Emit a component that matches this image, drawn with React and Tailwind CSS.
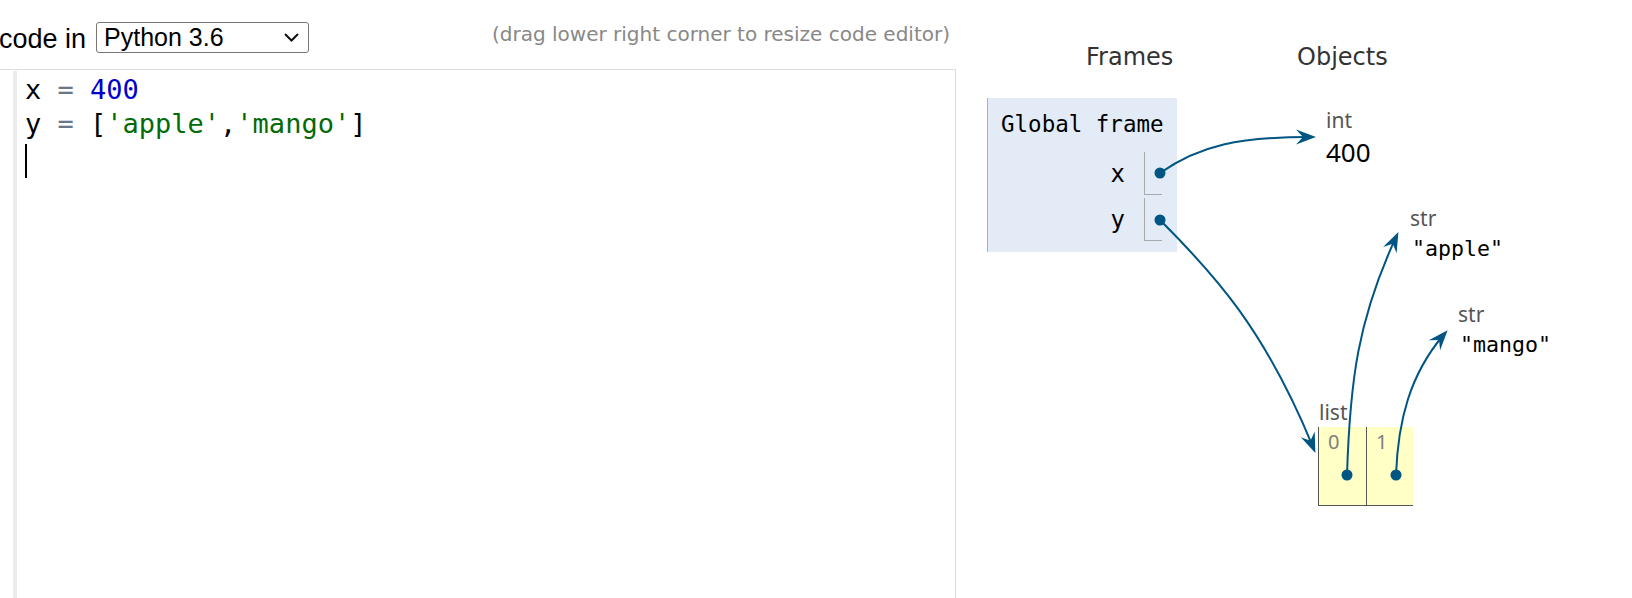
const ARROW = "#005583";

function Arrow({ d, end, angle }) {
  return (
    <g>
      <path d={d} fill="none" stroke={ARROW} strokeWidth="2" />
      <polygon
        points="7,0 -13,-7.5 -6,0 -13,7.5"
        fill={ARROW}
        transform={`translate(${end[0]} ${end[1]}) rotate(${angle})`}
      />
    </g>
  );
}

function Dot({ x, y }) {
  return <circle cx={x} cy={y} r="5.5" fill={ARROW} />;
}

function Label({ left, top, children }) {
  return (
    <div
      className="absolute text-[21px] leading-[24px] text-[#555]"
      style={{ left, top, fontFamily: '"Noto Sans", sans-serif' }}
    >
      {children}
    </div>
  );
}

function StrValue({ left, top, children }) {
  return (
    <div
      className="absolute text-[21.6px] leading-[26px] text-black"
      style={{ left, top, fontFamily: '"DejaVu Sans Mono", monospace' }}
    >
      {children}
    </div>
  );
}

function Editor() {
  const mono = { fontFamily: '"DejaVu Sans Mono", monospace' };
  return (
    <div className="flex h-[529px] border-t border-r border-[#dddddd] bg-white">
      <div className="ml-[13px] w-[4px] bg-[#ebebeb] mt-[1px]" />
      <div className="pl-[8px] pt-[3px] text-[27px] leading-[34px] text-black" style={mono}>
        <div>
          x <span className="text-[#687687]">=</span>{" "}
          <span className="text-[#0000cd]">400</span>
        </div>
        <div>
          y <span className="text-[#687687]">=</span> [
          <span className="text-[#036a07]">'apple'</span>,
          <span className="text-[#036a07]">'mango'</span>]
        </div>
        <div className="h-[34px]">
          <div className="w-[2px] h-[34px] mt-[3px] bg-black" />
        </div>
      </div>
    </div>
  );
}

function Header() {
  const arial = { fontFamily: '"Liberation Sans", Arial, sans-serif' };
  return (
    <div className="h-[69px] flex items-start">
      <span
        className="-ml-[1px] mt-[24px] text-[27px] leading-[30px] text-black whitespace-nowrap"
        style={arial}
      >
        code in
      </span>
      <div
        className="ml-[10px] mt-[22px] w-[213px] h-[31px] flex-none border border-[#767676] rounded-[3px] bg-white flex items-center justify-between pl-[7px] pr-[9px]"
        style={arial}
      >
        <span className="text-[25px] leading-[29px] text-black whitespace-nowrap">Python 3.6</span>
        <svg width="15" height="9" viewBox="0 0 15 9" className="flex-none">
          <polyline points="1,1 7.5,7.5 14,1" fill="none" stroke="#111" strokeWidth="2" />
        </svg>
      </div>
      <span
        className="ml-auto mr-[6px] mt-[22px] text-[20px] leading-[24px] text-[#888888] whitespace-nowrap"
        style={{ fontFamily: '"DejaVu Sans", Verdana, sans-serif' }}
      >
        (drag lower right corner to resize code editor)
      </span>
    </div>
  );
}

function GlobalFrame() {
  const mono = { fontFamily: '"DejaVu Sans Mono", monospace' };
  return (
    <div className="absolute left-[31px] top-[98px] w-[190px] h-[154px] bg-[#e2ebf6] border-l border-[#a6b3b6]">
      <div className="pl-[13px] pt-[13px] text-[22.5px] leading-[26px] text-black" style={mono}>
        Global frame
      </div>
      <div className="mt-[15px] flex flex-col gap-[3px] pr-[15px]">
        {["x", "y"].map((name) => (
          <div key={name} className="flex justify-end items-center h-[43px]">
            <span className="text-[24px] leading-[28px] mr-[19px] text-black" style={mono}>
              {name}
            </span>
            <div className="w-[18px] h-full border-l border-b border-[#aaaaaa]" />
          </div>
        ))}
      </div>
    </div>
  );
}

function ListObject() {
  const sans = { fontFamily: '"Noto Sans", sans-serif' };
  return (
    <div className="absolute left-[362px] top-[427px] flex h-[79px] bg-[#ffffc6] border-b border-[#555555]">
      {["0", "1"].map((i, k) => (
        <div
          key={i}
          className={`${k === 0 ? "w-[48px]" : "w-[47px]"} border-l border-[#555555] pl-[9px] pt-[3px] text-[20px] leading-[24px] text-[#808080]`}
          style={sans}
        >
          {i}
        </div>
      ))}
    </div>
  );
}

function Viz() {
  const sans = { fontFamily: '"DejaVu Sans", Verdana, sans-serif' };
  return (
    <div className="relative flex-1 h-[598px]">
      <div className="flex pt-[43px] pl-[130px] text-[24px] leading-[28px] text-[#333333]" style={sans}>
        <div className="w-[211px]">Frames</div>
        <div>Objects</div>
      </div>

      <GlobalFrame />

      <Label left={370} top={108}>int</Label>
      <div
        className="absolute left-[370px] top-[137px] text-[26px] leading-[30px] text-black"
        style={{ fontFamily: '"Noto Sans", sans-serif' }}
      >
        400
      </div>

      <Label left={454} top={206}>str</Label>
      <StrValue left={456} top={236}>"apple"</StrValue>

      <Label left={502} top={302}>str</Label>
      <StrValue left={504} top={332}>"mango"</StrValue>

      <Label left={363} top={400}>list</Label>
      <ListObject />

      <svg className="absolute inset-0 pointer-events-none" width="676" height="598">
        <g transform="translate(-956 0)">
          <Arrow d="M1160,173 C1200,145 1240,137 1309,137" end={[1309, 137]} angle={0} />
          <Arrow d="M1160,220 C1215,275 1265,330 1312.7,446.4" end={[1312.7, 446.4]} angle={67.8} />
          <Arrow d="M1347,475 C1350,380 1358,320 1395.4,238.4" end={[1395.4, 238.4]} angle={-64.6} />
          <Arrow d="M1396,475 C1398,420 1410,375 1443,335.5" end={[1443, 335.5]} angle={-48.9} />
          <Dot x={1160} y={173} />
          <Dot x={1160} y={220} />
          <Dot x={1347} y={475} />
          <Dot x={1396} y={475} />
        </g>
      </svg>
    </div>
  );
}

export default function App() {
  return (
    <div className="flex w-[1632px] h-[598px] overflow-hidden bg-white">
      <div className="w-[956px] flex-none">
        <Header />
        <Editor />
      </div>
      <Viz />
    </div>
  );
}
